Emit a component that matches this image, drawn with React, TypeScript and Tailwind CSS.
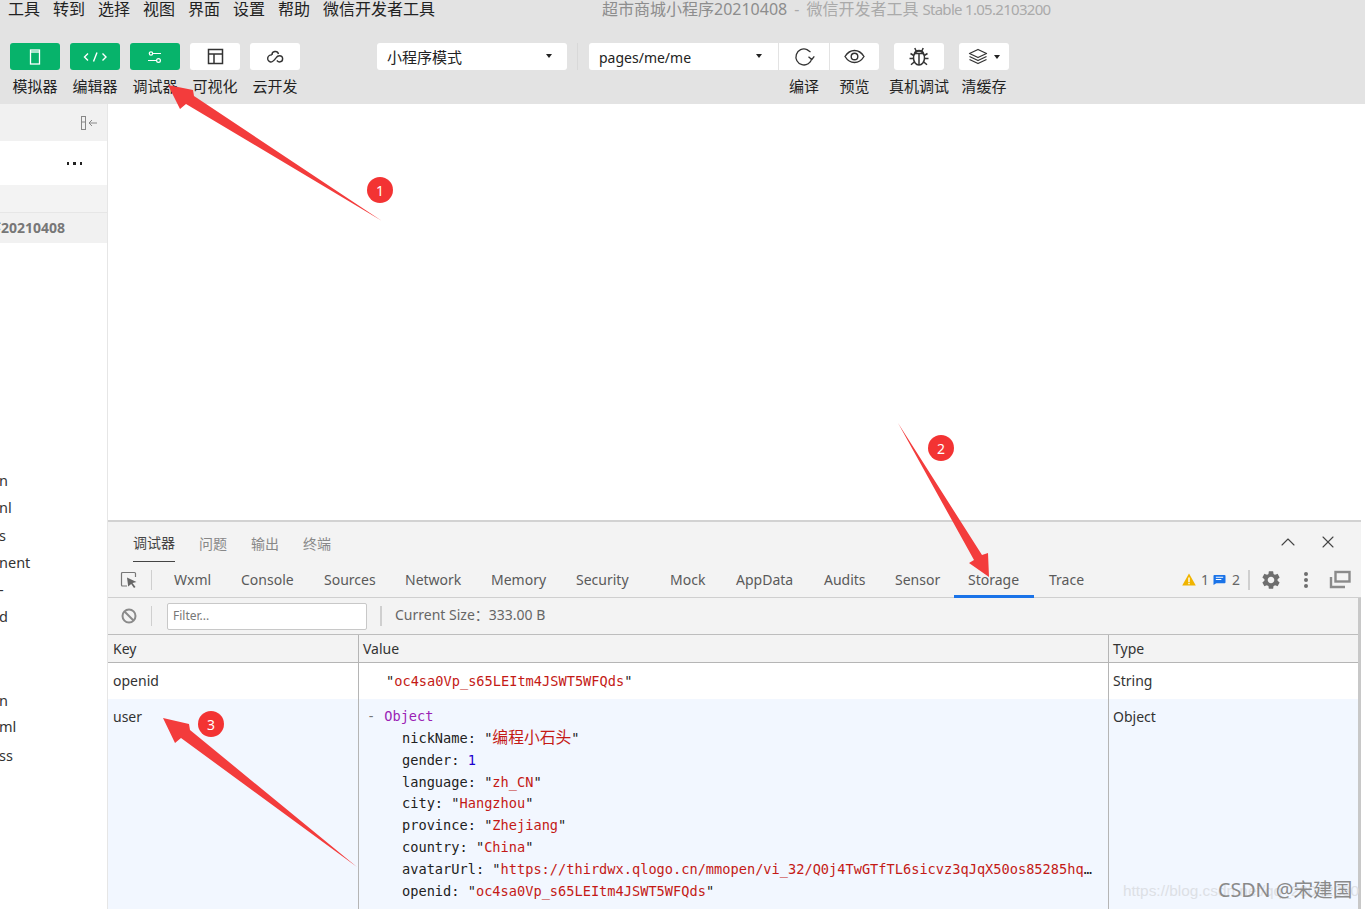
import { ChevronUp, X } from 'lucide-react';
import { MdSettings } from 'react-icons/md';
import type { ReactNode } from 'react';

const SANS = 'font-["Noto_Sans","Noto_Sans_CJK_SC",sans-serif]';

const menus = ['工具', '转到', '选择', '视图', '界面', '设置', '帮助', '微信开发者工具'];
const tabs = [
  ['Wxml', 'w-[67px]'],
  ['Console', 'w-[83px]'],
  ['Sources', 'w-[81px]'],
  ['Network', 'w-[86px]'],
  ['Memory', 'w-[85px]'],
  ['Security', 'w-[94px]'],
  ['Mock', 'w-[66px]'],
  ['AppData', 'w-[88px]'],
  ['Audits', 'w-[71px]'],
  ['Sensor', 'w-[59px]'],
  ['Storage', 'w-[80px] pl-[14px]'],
  ['Trace', 'w-[64px] pl-[15px]'],
];
const clipped: [string, string][] = [
  ['n', 'mt-[227px]'],
  ['nl', 'mt-[7px]'],
  ['s', 'mt-[8px]'],
  ['nent', 'mt-[7px]'],
  ['-', 'mt-[7px]'],
  ['d', 'mt-[7px]'],
  ['n', 'mt-[64px]'],
  ['ml', 'mt-[6px]'],
  ['ss', 'mt-[9px]'],
];
const fields: [string, string][] = [
  ['language', 'zh_CN'],
  ['city', 'Hangzhou'],
  ['province', 'Zhejiang'],
  ['country', 'China'],
];

function ToolButton({ icon, label, green }: { icon: ReactNode; label: string; green?: boolean }) {
  return (
    <div className="flex w-[60px] flex-col items-center">
      <div className={`flex h-[27px] w-[50px] items-center justify-center rounded-[3px] ${green ? 'bg-[#07b36b] text-white' : 'bg-white text-[#333]'}`}>
        {icon}
      </div>
      <span className="mt-[6px] text-[15px] leading-[20px] text-[#222]">{label}</span>
    </div>
  );
}

function Header() {
  return (
    <header className="h-[104px] shrink-0 overflow-hidden bg-[#e3e3e3]">
      <div className="relative flex h-[18px] items-center pl-[8px] text-[16px] text-[#222]">
        <div className="flex gap-[13px]">
          {menus.map((m) => (
            <span key={m} className="leading-[16px]">{m}</span>
          ))}
        </div>
        <span className="absolute left-[602px] top-[1px] flex whitespace-nowrap text-[16px] leading-[16px] text-[#8d8d8d]">
          <span>超市商城小程序20210408</span>
          <span className="ml-[7px] text-[#aaa]">-</span>
          <span className="ml-[7px] text-[#aaa]">微信开发者工具</span>
          <span className="ml-[4px] text-[15px] tracking-[-0.700px] text-[#aaa]">Stable 1.05.2103200</span>
        </span>
      </div>
      <div className="mt-[25px] flex items-start pl-[5px]">
        <ToolButton
          green
          label="模拟器"
          icon={
            <svg width="16" height="18" viewBox="0 0 16 18" fill="none" stroke="currentColor" strokeWidth="1.3">
              <rect x="3.5" y="2" width="9" height="14" />
              <path d="M3.5 4h9" />
            </svg>
          }
        />
        <ToolButton
          green
          label="编辑器"
          icon={
            <svg width="24" height="12" viewBox="0 0 24 12" fill="none" stroke="currentColor" strokeWidth="1.4">
              <path d="M5 2.5 1.5 6 5 9.5M14 1.5l-3.5 9M19.5 2.5 23 6l-3.5 3.5" />
            </svg>
          }
        />
        <ToolButton
          green
          label="调试器"
          icon={
            <svg width="16" height="14" viewBox="0 0 16 14" fill="none" stroke="currentColor" strokeWidth="1.2">
              <circle cx="4" cy="3.5" r="1.7" />
              <path d="M5.7 3.5h8.3M1 10.5h8.5" />
              <circle cx="11.5" cy="10.5" r="1.9" />
            </svg>
          }
        />
        <ToolButton
          label="可视化"
          icon={
            <svg width="17" height="17" viewBox="0 0 17 17" fill="none" stroke="currentColor" strokeWidth="1.5">
              <rect x="1.5" y="1.5" width="14" height="14" />
              <path d="M1.5 6h14M7 6v9.5" />
            </svg>
          }
        />
        <ToolButton
          label="云开发"
          icon={
            <svg width="18" height="15" viewBox="0 0 18 15" fill="none" stroke="currentColor" strokeWidth="1.4">
              <path d="M6 6A3.500 3.500 0 1 0 4.500 13C7 13 8.800 10.500 10 8.800 11 7.300 12 6.700 13.500 6.700A3.100 3.100 0 1 1 13.500 13C12.300 13 11.500 12.300 10.800 11.600" />
              <path d="M6 6A3.300 3.300 0 0 1 12.500 5" />
            </svg>
          }
        />
        <div className="ml-[72px] flex h-[27px] w-[190px] items-center justify-between rounded-[3px] bg-white pl-[10px] pr-[15px] text-[15px] text-[#222]">
          <span className="mt-[2px]">小程序模式</span>
          <span className="mb-[2px] border-x-[3px] border-t-[4px] border-x-transparent border-t-[#222]" />
        </div>
        <div className="ml-[10px] mr-[11px] h-[27px] w-px bg-[#d8d8d8]" />
        <div className="flex h-[27px] w-[189px] items-center justify-between rounded-l-[3px] bg-white pl-[10px] pr-[16px] text-[14px] text-[#222]">
          <span className="mt-[2px]">pages/me/me</span>
          <span className="mb-[2px] border-x-[3px] border-t-[4px] border-x-transparent border-t-[#222]" />
        </div>
        <div className="ml-px flex w-[50px] flex-col items-center">
          <div className="flex h-[27px] w-[50px] items-center justify-center bg-white text-[#333]">
            <svg width="21" height="20" viewBox="0 0 21 20" fill="none" stroke="currentColor" strokeWidth="1.3">
              <path d="M17.800 11.500A8 8 0 1 1 13 2.600L16.500 5" />
              <path d="M14.500 9.800 17.800 12.500 20.300 9.300" />
            </svg>
          </div>
          <span className="mt-[6px] text-[15px] leading-[20px] text-[#222]">编译</span>
        </div>
        <div className="ml-px flex w-[49px] flex-col items-center">
          <div className="flex h-[27px] w-[49px] items-center justify-center rounded-r-[3px] bg-white text-[#333]">
            <svg width="21" height="15" viewBox="0 0 21 15" fill="none" stroke="currentColor" strokeWidth="1.4">
              <path d="M1 7.500c2.500-4 5.800-6 9.500-6s7 2 9.500 6c-2.500 4-5.800 6-9.500 6s-7-2-9.500-6Z" />
              <circle cx="10.500" cy="7.500" r="3.300" />
            </svg>
          </div>
          <span className="mt-[6px] text-[15px] leading-[20px] text-[#222]">预览</span>
        </div>
        <div className="ml-[15px] flex w-[50px] flex-col items-center">
          <div className="flex h-[27px] w-[50px] items-center justify-center rounded-[3px] bg-white text-[#333]">
            <svg width="22" height="20" viewBox="0 0 22 20" fill="none" stroke="currentColor" strokeWidth="1.5">
              <ellipse cx="11" cy="11" rx="5.500" ry="7" />
              <path d="M6.500 6.500C7 4.500 9 3.500 11 3.500s4 1 4.500 3H6.500ZM11 6.500V18M8 3.800 6.800 1M14 3.800 15.200 1M5.800 8.500 2.500 6.500M16.200 8.500l3.300-2M5.500 11.500H1.500M16.500 11.500h4M6.200 15 3 17.800M15.800 15l3.200 2.800" />
            </svg>
          </div>
          <span className="mt-[6px] whitespace-nowrap text-[15px] leading-[20px] text-[#222]">真机调试</span>
        </div>
        <div className="ml-[15px] flex w-[50px] flex-col items-center">
          <div className="flex h-[27px] w-[50px] items-center justify-center gap-[6px] rounded-[3px] bg-white text-[#333]">
            <svg width="20" height="17" viewBox="0 0 20 17" fill="none" stroke="currentColor" strokeWidth="1.3" strokeLinejoin="round">
              <path d="M10 1.500 18.500 5.500 10 9.500 1.500 5.500ZM1.500 8.500l8.500 4 8.500-4M1.500 11.500l8.500 4 8.500-4" />
            </svg>
            <span className="border-x-[3px] border-t-[4px] border-x-transparent border-t-[#222]" />
          </div>
          <span className="mt-[6px] text-[15px] leading-[20px] text-[#222]">清缓存</span>
        </div>
      </div>
    </header>
  );
}

function Sidebar() {
  return (
    <aside className="flex h-full w-[108px] shrink-0 flex-col overflow-hidden border-r border-[#e6e6e6] bg-white text-[#333]">
      <div className="flex h-[37px] items-center justify-end bg-[#f1f1f1] pr-[9px] text-[#888]">
        <svg width="18" height="16" viewBox="0 0 18 16" fill="none" stroke="currentColor" strokeWidth="1">
          <rect x="1.500" y="1.500" width="4" height="13" />
          <path d="M1.500 7h4M17 8H9M12 5 9 8l3 3" />
        </svg>
      </div>
      <div className="flex h-[44px] items-center justify-end pr-[25px] pt-[1px]">
        <div className="flex gap-[4px]">
          <span className="size-[2.500px] bg-[#222]" />
          <span className="size-[2.500px] bg-[#222]" />
          <span className="size-[2.500px] bg-[#222]" />
        </div>
      </div>
      <div className="h-[28px] border-b border-[#e6e6e6] bg-[#f3f3f3]" />
      <div className="flex h-[30px] items-center overflow-hidden whitespace-nowrap bg-[#f1f1f1] pb-[2px] text-[14px] font-bold text-[#777]">
        <span className="-ml-[13px]">序20210408</span>
      </div>
      <div className="flex flex-col text-[14.500px] leading-[20px]">
        {clipped.map(([t, m], i) => (
          <span key={i} className={`${m} -ml-[1px]`}>{t}</span>
        ))}
      </div>
    </aside>
  );
}

function ObjectRow({ k, children }: { k: string; children: ReactNode }) {
  return (
    <div className="whitespace-nowrap pl-[43px] text-[#222]">
      {k}: {children}
    </div>
  );
}

function Debugger() {
  return (
    <section className="mr-[4px] flex h-[389px] shrink-0 flex-col overflow-hidden border-t-2 border-[#d2d2d2] bg-[#f3f3f3] text-[14px] text-[#5a5a5a]">
      <div className="flex h-[40px] items-start justify-between pl-[25px] pr-[23px]">
        <div className="flex gap-[24px] text-[14px]">
          <div className="flex h-[40px] items-center border-b border-[#444] pt-[2px] text-[#444]">调试器</div>
          <div className="flex h-[40px] items-center pt-[2px] text-[#888]">问题</div>
          <div className="flex h-[40px] items-center pt-[2px] text-[#888]">输出</div>
          <div className="flex h-[40px] items-center pt-[2px] text-[#888]">终端</div>
        </div>
        <div className="mt-[8px] flex items-center gap-[18px] text-[#444]">
          <ChevronUp size={24} strokeWidth={1.100} />
          <X size={20} strokeWidth={1.300} />
        </div>
      </div>
      <div className="flex h-[36px] items-center border-b border-[#cfcfcf]">
        <div className="flex h-[20px] w-[44px] items-center justify-center border-r border-[#cfcfcf]">
          <svg width="18" height="18" viewBox="0 0 18 18" fill="none" className="ml-[-2px]">
            <path d="M7 15H2.500a1 1 0 0 1-1-1V2.500a1 1 0 0 1 1-1h12a1 1 0 0 1 1 1V6" stroke="#777" strokeWidth="1.200" />
            <path d="M7 6.500 16.500 11l-4 1 3 4-1.500 1-2.800-4-3 2.500Z" fill="#666" />
          </svg>
        </div>
        <div className="flex h-[36px] items-center whitespace-nowrap pl-[22px]">
          {tabs.map(([name, w]) => (
            <div
              key={name}
              className={`flex h-[36px] items-center ${w} ${name === 'Storage' ? 'border-b-[3px] border-[#1a73e8] pt-[3px]' : ''}`}
            >
              {name}
            </div>
          ))}
        </div>
        <div className="ml-auto flex items-center pr-[10px]">
          <svg width="14" height="13" viewBox="0 0 14 13">
            <path d="M7 .5 13.800 12.500H.2Z" fill="#f0b400" />
            <path d="M6.300 4.500h1.400v4.500H6.300ZM6.300 9.800h1.400v1.400H6.300Z" fill="#fff" />
          </svg>
          <span className="ml-[5px] w-[8px] text-[#666]">1</span>
          <svg width="13" height="12" viewBox="0 0 14 13" className="ml-[4px]">
            <path d="M1.500 1h11a1 1 0 0 1 1 1v7a1 1 0 0 1-1 1H3.500L.5 12V2a1 1 0 0 1 1-1Z" fill="#1a73e8" />
            <path d="M3 3.500h8M3 6h6" stroke="#fff" strokeWidth="1.100" />
          </svg>
          <span className="ml-[6px] w-[8px] text-[#666]">2</span>
          <div className="ml-[8px] h-[20px] w-[2px] bg-[#cfcfcf]" />
          <MdSettings size={22} className="ml-[10px] text-[#6e6e6e]" />
          <svg width="20" height="20" viewBox="0 0 20 20" className="ml-[14px]" fill="#6e6e6e">
            <circle cx="10" cy="4" r="2" />
            <circle cx="10" cy="10" r="2" />
            <circle cx="10" cy="16" r="2" />
          </svg>
          <svg width="22" height="19" viewBox="0 0 22 19" className="ml-[13px]" fill="none" stroke="#8a8a8a" strokeWidth="2.400">
            <rect x="6.500" y="2" width="14" height="9.500" />
            <path d="M2 7v10h14" />
          </svg>
        </div>
      </div>
      <div className="flex min-h-0 flex-1 flex-col border-r-[3px] border-[#c8c8c8]">
        <div className="flex h-[37px] shrink-0 items-center border-b border-[#bdbdbd]">
          <div className="flex h-[20px] w-[44px] items-center justify-center border-r border-[#cfcfcf]">
            <svg width="16" height="16" viewBox="0 0 16 16" fill="none" stroke="#8a8a8a" strokeWidth="2" className="ml-[-2px]">
              <circle cx="8" cy="8" r="6.500" />
              <path d="M3.500 3.500 12.500 12.500" />
            </svg>
          </div>
          <div className="ml-[15px] flex h-[27px] w-[200px] items-center rounded-[2px] border border-[#c8c8c8] bg-white pl-[5px] text-[12px] text-[#777]">Filter...</div>
          <div className="ml-[13px] h-[20px] w-[2px] bg-[#cfcfcf]" />
          <span className="-mt-[3px] ml-[13px] text-[#666]">Current Size：333.00 B</span>
        </div>
        <div className="flex h-[28px] shrink-0 border-b border-[#b5b5b5] leading-[27px] text-[#333]">
          <div className="w-[251px] border-r border-[#b5b5b5] pl-[5px]">Key</div>
          <div className="w-[750px] border-r border-[#b5b5b5] pl-[4px]">Value</div>
          <div className="flex-1 pl-[4px]">Type</div>
        </div>
        <div className="flex min-h-0 flex-1 flex-col overflow-hidden text-[#333]">
          <div className="flex h-[36px] shrink-0 bg-white">
            <div className="w-[251px] border-r border-[#b5b5b5] pl-[5px] leading-[36px]">openid</div>
            <div className="w-[750px] border-r border-[#b5b5b5] pl-[27px] font-['DejaVu_Sans_Mono','Noto_Sans_CJK_SC',monospace] text-[13.650px] leading-[36px] text-[#222]">
              "<span className="text-[#c41a16]">oc4sa0Vp_s65LEItm4JSWT5WFQds</span>"
            </div>
            <div className="flex-1 pl-[4px] leading-[36px]">String</div>
          </div>
          <div className="flex flex-1 bg-[#f2f7ff]">
            <div className="w-[251px] border-r border-[#b5b5b5] pl-[5px] pt-[7px] leading-[21px]">user</div>
            <div className="w-[750px] overflow-hidden border-r border-[#b5b5b5] pt-[7.300px] font-['DejaVu_Sans_Mono','Noto_Sans_CJK_SC',monospace] text-[13.650px] leading-[21.800px]">
              <div className="flex gap-[9px] pl-[8px]">
                <span className="text-[#777]">-</span>
                <span className="text-[#9b1fb5]">Object</span>
              </div>
              <ObjectRow k="nickName">
                "<span className="text-[15.800px] leading-none text-[#c41a16]">编程小石头</span>"
              </ObjectRow>
              <ObjectRow k="gender">
                <span className="text-[#1c00cf]">1</span>
              </ObjectRow>
              {fields.map(([k, v]) => (
                <ObjectRow key={k} k={k}>
                  "<span className="text-[#c41a16]">{v}</span>"
                </ObjectRow>
              ))}
              <div className="flex pl-[43px] pr-[9px] text-[#222]">
                <span className="truncate">
                  avatarUrl: "<span className="text-[#c41a16]">https://thirdwx.qlogo.cn/mmopen/vi_32/Q0j4TwGTfTL6sicvz3qJqX50os85285hqPvQeXn2a</span>
                </span>
              </div>
              <ObjectRow k="openid">
                "<span className="text-[#c41a16]">oc4sa0Vp_s65LEItm4JSWT5WFQds</span>"
              </ObjectRow>
            </div>
            <div className="flex-1 pl-[4px] pt-[7px] leading-[21px]">Object</div>
          </div>
        </div>
      </div>
    </section>
  );
}

function Badge({ n, className }: { n: number; className: string }) {
  return (
    <span className={`absolute flex size-[26px] items-center justify-center rounded-full bg-[#f33333] text-[14px] text-white ${className}`}>{n}</span>
  );
}

// 红色标注箭头，盖在截图上面
function Annotations() {
  return (
    <>
      <svg className="pointer-events-none absolute inset-0" width="1365" height="909" viewBox="0 0 1365 909" fill="#f33c3c">
        <path d="M168 85 193 90 194 96 382 221 186 104 180 109Z" />
        <path d="M989 577 969 563 974 560 898 423 982 555 988 553Z" />
        <path d="M163 718 189 724 190 730 357 867 181 738 175 743Z" />
      </svg>
      <Badge n={1} className="left-[367px] top-[177px]" />
      <Badge n={2} className="left-[928px] top-[435px]" />
      <Badge n={3} className="left-[198px] top-[711px]" />
      <div className="absolute left-[1123px] top-[880px] whitespace-nowrap font-['Liberation_Sans',sans-serif] text-[15.400px] leading-[22px] text-[#dde0e5]">https://blog.csdn.net/qq_20042880</div>
      <div className={`absolute left-[1218px] top-[877px] whitespace-nowrap text-[19.700px] leading-[26px] text-[#8a8a8a] ${SANS}`}>CSDN @宋建国</div>
    </>
  );
}

export default function App() {
  return (
    <div className={`relative flex h-[909px] w-[1365px] flex-col overflow-hidden bg-white ${SANS}`}>
      <Header />
      <div className="flex min-h-0 flex-1">
        <Sidebar />
        <main className="flex min-w-0 flex-1 flex-col">
          <div className="flex-1 bg-white" />
          <Debugger />
        </main>
      </div>
      <Annotations />
    </div>
  );
}
